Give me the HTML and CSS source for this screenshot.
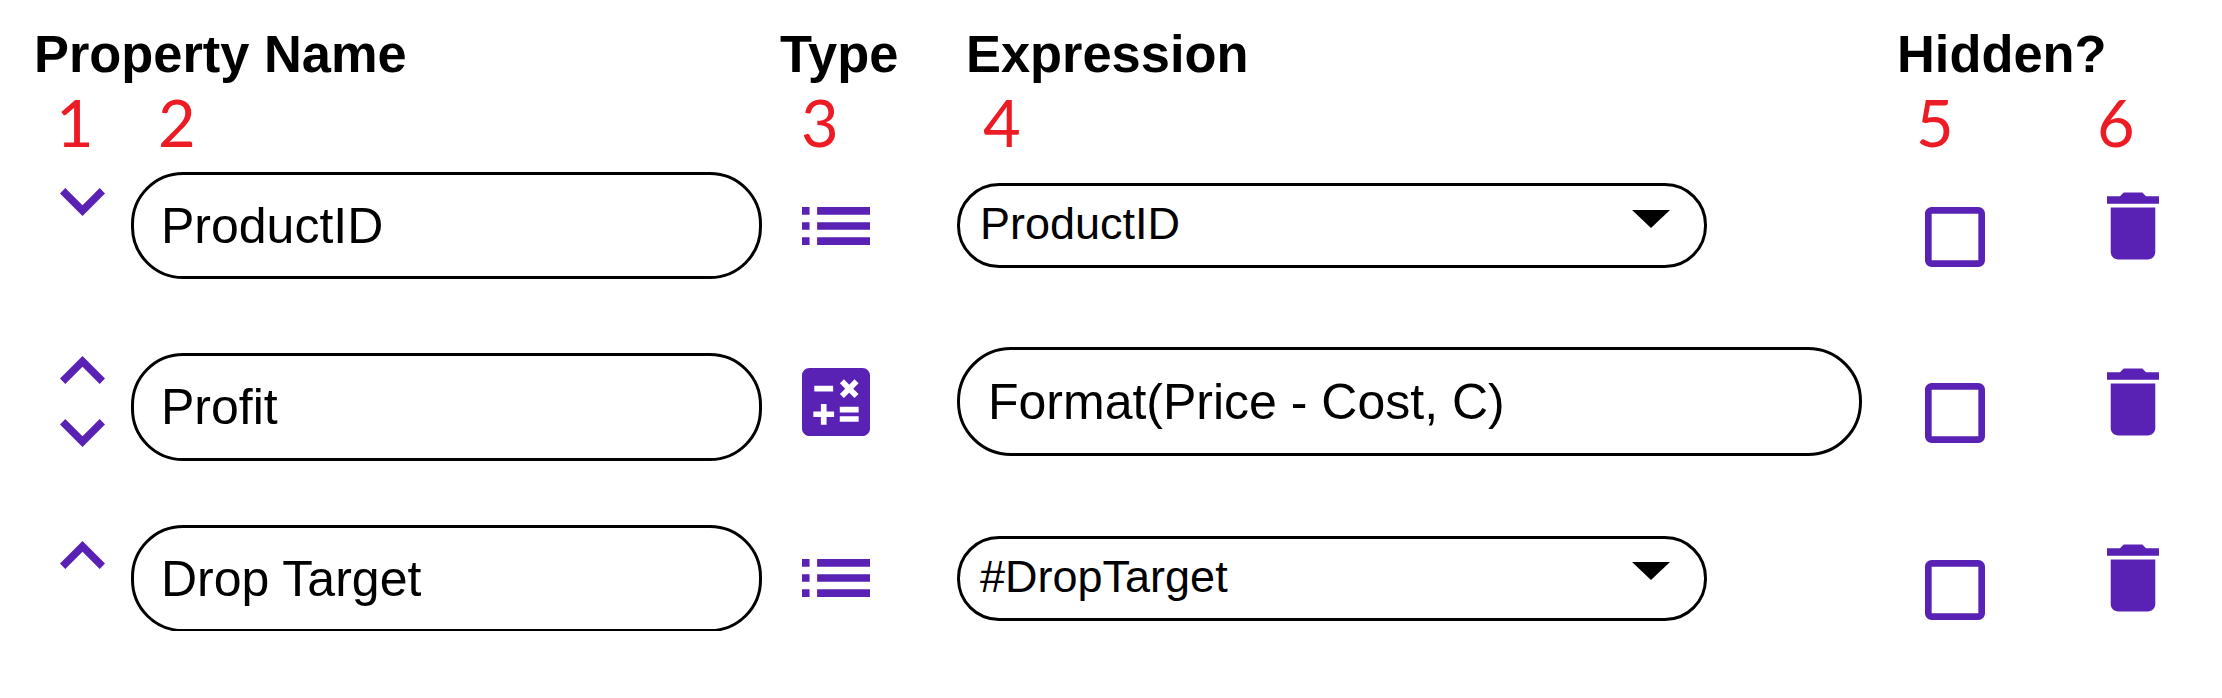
FILE: index.html
```html
<!DOCTYPE html>
<html lang="en">
<head>
    <meta charset="UTF-8">
    <meta name="viewport" content="width=device-width, initial-scale=1.0">
    <title>Table Properties</title>
    <link rel="stylesheet" href="styles.css">
</head>
<body>

<div class="sheet">
    <div class="headings">
        <div>Property Name</div>
        <div>Type</div>
        <div>Expression</div>
        <div>Hidden?</div>
    </div>

    <!-- red callout numbers -->
    <div class="callouts">
        <div>1</div>
        <div>2</div>
        <div>3</div>
        <div>4</div>
        <div>5</div>
        <div>6</div>
    </div>

    <div class="row row-first">
        <div class="move move-single">
            <svg class="chevron" viewBox="6 8.59 12 7.41"><path d="M16.59 8.59L12 13.17 7.41 8.59 6 10l6 6 6-6z"/></svg>
        </div>
        <div class="pill">ProductID</div>
        <div class="type">
            <svg class="icon-list" viewBox="3 7 18 10"><path d="M3 13h2v-2H3v2zm0 4h2v-2H3v2zm0-8h2V7H3v2zm4 4h14v-2H7v2zm0 4h14v-2H7v2zM7 7v2h14V7H7z"/></svg>
        </div>
        <div class="expr">
            <div class="select">
                <span class="select-text">ProductID</span>
                <span class="caret"></span>
            </div>
        </div>
        <div class="hide">
            <svg class="icon-check" viewBox="3 3 18 18"><path d="M19 5v14H5V5h14m0-2H5c-1.1 0-2 .9-2 2v14c0 1.1.9 2 2 2h14c1.1 0 2-.9 2-2V5c0-1.1-.9-2-2-2z"/></svg>
        </div>
        <div class="remove">
            <svg class="icon-trash" viewBox="5 3 14 18"><path d="M6 19c0 1.1.9 2 2 2h8c1.1 0 2-.9 2-2V7H6v12zM19 4h-3.5l-1-1h-5l-1 1H5v2h14V4z"/></svg>
        </div>
    </div>

    <div class="row row-second">
        <div class="move">
            <svg class="chevron" viewBox="6 8 12 7.41"><path d="M12 8l-6 6 1.41 1.41L12 10.83l4.59 4.58L18 14z"/></svg>
            <svg class="chevron" viewBox="6 8.59 12 7.41"><path d="M16.59 8.59L12 13.17 7.41 8.59 6 10l6 6 6-6z"/></svg>
        </div>
        <div class="pill pill-lower">Profit</div>
        <div class="type">
            <svg class="icon-calc" viewBox="3 3 18 18"><path d="M19 3H5c-1.1 0-2 .9-2 2v14c0 1.1.9 2 2 2h14c1.1 0 2-.9 2-2V5c0-1.1-.9-2-2-2zm-5.97 4.06L14.09 6l1.41 1.41L16.91 6l1.06 1.06-1.41 1.41 1.41 1.41-1.06 1.06-1.41-1.4-1.41 1.41-1.06-1.06 1.41-1.41-1.41-1.42zm-6.78.66h5v1.5h-5v-1.5zM11.5 16h-2v2H8v-2H6v-1.5h2v-2h1.5v2h2V16zm6.5 1.25h-5v-1.5h5v1.5zm0-2.5h-5v-1.5h5v1.5z"/></svg>
        </div>
        <div class="expr">
            <div class="formula">Format(Price - Cost, C)</div>
        </div>
        <div class="hide">
            <svg class="icon-check" viewBox="3 3 18 18"><path d="M19 5v14H5V5h14m0-2H5c-1.1 0-2 .9-2 2v14c0 1.1.9 2 2 2h14c1.1 0 2-.9 2-2V5c0-1.1-.9-2-2-2z"/></svg>
        </div>
        <div class="remove">
            <svg class="icon-trash" viewBox="5 3 14 18"><path d="M6 19c0 1.1.9 2 2 2h8c1.1 0 2-.9 2-2V7H6v12zM19 4h-3.5l-1-1h-5l-1 1H5v2h14V4z"/></svg>
        </div>
    </div>

    <div class="row row-third">
        <div class="move move-single">
            <svg class="chevron" viewBox="6 8 12 7.41"><path d="M12 8l-6 6 1.41 1.41L12 10.83l4.59 4.58L18 14z"/></svg>
        </div>
        <div class="pill">Drop Target</div>
        <div class="type">
            <svg class="icon-list" viewBox="3 7 18 10"><path d="M3 13h2v-2H3v2zm0 4h2v-2H3v2zm0-8h2V7H3v2zm4 4h14v-2H7v2zm0 4h14v-2H7v2zM7 7v2h14V7H7z"/></svg>
        </div>
        <div class="expr">
            <div class="select">
                <span class="select-text">#DropTarget</span>
                <span class="caret"></span>
            </div>
        </div>
        <div class="hide">
            <svg class="icon-check" viewBox="3 3 18 18"><path d="M19 5v14H5V5h14m0-2H5c-1.1 0-2 .9-2 2v14c0 1.1.9 2 2 2h14c1.1 0 2-.9 2-2V5c0-1.1-.9-2-2-2z"/></svg>
        </div>
        <div class="remove">
            <svg class="icon-trash" viewBox="5 3 14 18"><path d="M6 19c0 1.1.9 2 2 2h8c1.1 0 2-.9 2-2V7H6v12zM19 4h-3.5l-1-1h-5l-1 1H5v2h14V4z"/></svg>
        </div>
    </div>
</div>

</body>
</html>
```

FILE: styles.css
```css
body {
    margin: 0;
    padding: 0;
    background: white;
    color: black;
    font-family: "Liberation Sans", Arial, sans-serif;
}

.sheet {
    padding-top: 24px;
}

.headings {
    display: grid;
    grid-template-columns: 746px 186px 931px 1fr;
    padding-left: 34px;
    font-size: 52.4px;
    font-weight: bold;
    line-height: 60px;
}

.callouts {
    display: grid;
    grid-template-columns: 102px 643px 182px 933px 181px 1fr;
    padding-left: 56px;
    color: #ed1c24;
    font-family: Lato, sans-serif;
    font-size: 65px;
    line-height: 66px;
    height: 62px;
    margin-top: 5px;
}

/* every row shares the same columns, items are centred on the row */
.row {
    display: grid;
    grid-template-columns: 131px 631px 195px 968px 182px 1fr;
    grid-template-rows: 100%;
    align-items: center;
}

.row-first {
    height: 107px;
    margin-top: 21px;
}

.row-second {
    height: 109px;
    margin-top: 68px;
}

.row-third {
    height: 106px;
    margin-top: 69px;
}

svg {
    display: block;
    fill: #5a22b4;
}

.move {
    display: flex;
    flex-direction: column;
    gap: 35px;
    padding-left: 60px;
}

.move-single {
    margin-bottom: 47px;
}

.chevron {
    width: 45px;
    height: 28px;
}

.pill {
    box-sizing: border-box;
    height: 107px;
    border: 3px solid black;
    border-radius: 52px;
    padding-left: 27px;
    font-size: 50px;
    line-height: 102px;
}

.pill-lower {
    height: 108px;
    margin-top: 11px;
}

.type {
    padding-left: 40px;
}

.icon-list {
    width: 68px;
    height: 38px;
}

.icon-calc {
    width: 68px;
    height: 68px;
}

.select {
    box-sizing: border-box;
    width: 750px;
    height: 85px;
    border: 3px solid black;
    border-radius: 42px;
    padding: 0 34px 0 20px;
    display: flex;
    justify-content: space-between;
    align-items: center;
    font-size: 45px;
}

.select-text {
    margin-bottom: 3px;
}

.caret {
    width: 0;
    height: 0;
    margin-bottom: 14px;
    border-left: 19px solid transparent;
    border-right: 19px solid transparent;
    border-top: 18px solid black;
}

.formula {
    box-sizing: border-box;
    width: 905px;
    height: 109px;
    border: 3px solid black;
    border-radius: 54px;
    padding-left: 28px;
    font-size: 50px;
    line-height: 104px;
}

.icon-check {
    width: 60px;
    height: 60px;
    margin-top: 23px;
}

.icon-trash {
    width: 52px;
    height: 68px;
}
```
